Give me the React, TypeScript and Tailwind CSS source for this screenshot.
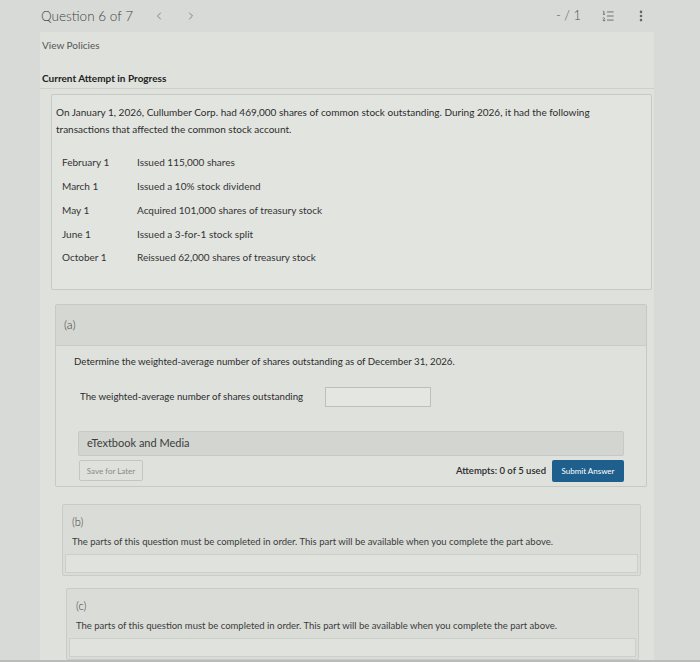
import { ChevronLeft, ChevronRight, ListOrdered, EllipsisVertical } from "lucide-react";

const transactions = [
  { date: "February 1", text: "Issued 115,000 shares" },
  { date: "March 1", text: "Issued a 10% stock dividend" },
  { date: "May 1", text: "Acquired 101,000 shares of treasury stock" },
  { date: "June 1", text: "Issued a 3-for-1 stock split" },
  { date: "October 1", text: "Reissued 62,000 shares of treasury stock" },
];

function LockedPart({ label, className }: { label: string; className: string }) {
  return (
    <div className={`border border-[#c9ccc7] rounded-[2px] bg-[#d9dcd7] ${className}`}>
      <div className="px-[9px] pt-[10px] pb-[6px]">
        <div className="text-[11px] leading-[14px] text-[#3a3a3a] font-light">{label}</div>
        <div className="mt-[7px] text-[9.5px] leading-[12px] text-[#3b3b3b]">
          The parts of this question must be completed in order. This part will be available when you
          complete the part above.
        </div>
      </div>
      <div className="mx-[2px] mb-[2px] h-[19px] border border-[#ccd0cb] bg-[#e0e2de]" />
    </div>
  );
}

export default function App() {
  return (
    <div className="w-[700px] h-[662px] overflow-hidden bg-[#d7dad6] font-['Lato',sans-serif] text-[#333] flex flex-col">
      {/* top bar */}
      <div className="h-[32px] flex items-center pl-[41px] pr-[52px] shrink-0">
        <span className="text-[13.5px] text-[#444] font-light">Question 6 of 7</span>
        <ChevronLeft className="ml-[20px] w-[12px] h-[12px] text-[#666]" strokeWidth={1.5} />
        <ChevronRight className="ml-[20px] w-[12px] h-[12px] text-[#666]" strokeWidth={1.5} />
        <div className="flex-1" />
        <span className="text-[13px] text-[#555] font-light">- / 1</span>
        <ListOrdered className="ml-[20px] w-[14px] h-[14px] text-[#666]" strokeWidth={1.5} />
        <EllipsisVertical className="ml-[19px] w-[14px] h-[14px] text-[#666]" strokeWidth={2.5} />
      </div>

      <div className="ml-[40px] w-[614px] flex-1 bg-[#dfe1dd] flex flex-col">
        <div className="border-b border-[#cdd0cb] pl-[2px] pt-[6px] pb-[3px]">
          <div className="text-[10px] leading-[14px] text-[#555]">View Policies</div>
          <div className="mt-[19px] text-[10px] leading-[14px] font-bold text-[#222]">
            Current Attempt in Progress
          </div>
        </div>

        {/* problem statement */}
        <div className="mt-[5px] ml-[11px] w-[601px] border border-[#c6c9c4] rounded-[2px] bg-[#e2e4e0] pl-[4px] pt-[9px] pb-[19px]">
          <p className="text-[10px] leading-[17px] text-[#2c2c2c]">
            On January 1, 2026, Cullumber Corp. had 469,000 shares of common stock outstanding. During 2026, it had
            the following
            <br />
            transactions that affected the common stock account.
          </p>
          <div className="mt-[13px] ml-[6px] flex flex-col">
            {transactions.map((t) => (
              <div key={t.date} className="h-[23.75px] flex items-center text-[10px] text-[#333]">
                <span className="w-[75px]">{t.date}</span>
                <span>{t.text}</span>
              </div>
            ))}
          </div>
        </div>

        {/* part (a) */}
        <div className="mt-[14px] ml-[15px] w-[592px] border border-[#c6c9c4] rounded-[2px] bg-[#dfe1dd]">
          <div className="h-[41px] bg-[#d4d7d2] border-b border-[#c9ccc7] flex items-center pl-[8px]">
            <span className="text-[12px] text-[#3a3a3a] font-light">(a)</span>
          </div>
          <div className="pl-[18px] pr-[22px]">
            <div className="mt-[8px] text-[9.7px] leading-[14px] text-[#2c2c2c]">
              Determine the weighted-average number of shares outstanding as of December 31, 2026.
            </div>
            <div className="mt-[19px] ml-[6px] flex items-center">
              <span className="w-[245px] text-[9.7px] text-[#2c2c2c]">
                The weighted-average number of shares outstanding
              </span>
              <div className="w-[106px] h-[20px] border border-[#bcbfba] bg-[#e4e6e2]" />
            </div>
            <div className="mt-[24px] ml-[4px] h-[25px] border border-[#c6c9c4] rounded-[2px] bg-[#d2d5d0] flex items-center pl-[8px]">
              <span className="text-[11px] text-[#3c3c3c]">eTextbook and Media</span>
            </div>
            <div className="mt-[4px] ml-[5px] mb-[4px] flex items-center">
              <div className="w-[64px] h-[21px] border border-[#c3c6c1] rounded-[2px] flex items-center justify-center text-[8px] text-[#8a8a8a]">
                Save for Later
              </div>
              <div className="flex-1" />
              <span className="text-[9.5px] font-semibold text-[#2a2a2a]">Attempts: 0 of 5 used</span>
              <div className="ml-[6px] w-[72px] h-[22px] rounded-[2px] bg-[#1f5f8e] flex items-center justify-center text-[8px] text-white">
                Submit Answer
              </div>
            </div>
          </div>
        </div>

        <LockedPart label="(b)" className="mt-[17px] ml-[22px] w-[579px]" />
        <LockedPart label="(c)" className="mt-[12px] ml-[26px] w-[573px]" />
      </div>
      <div className="h-[7px] bg-[#b9bcb8] shrink-0" />
    </div>
  );
}
